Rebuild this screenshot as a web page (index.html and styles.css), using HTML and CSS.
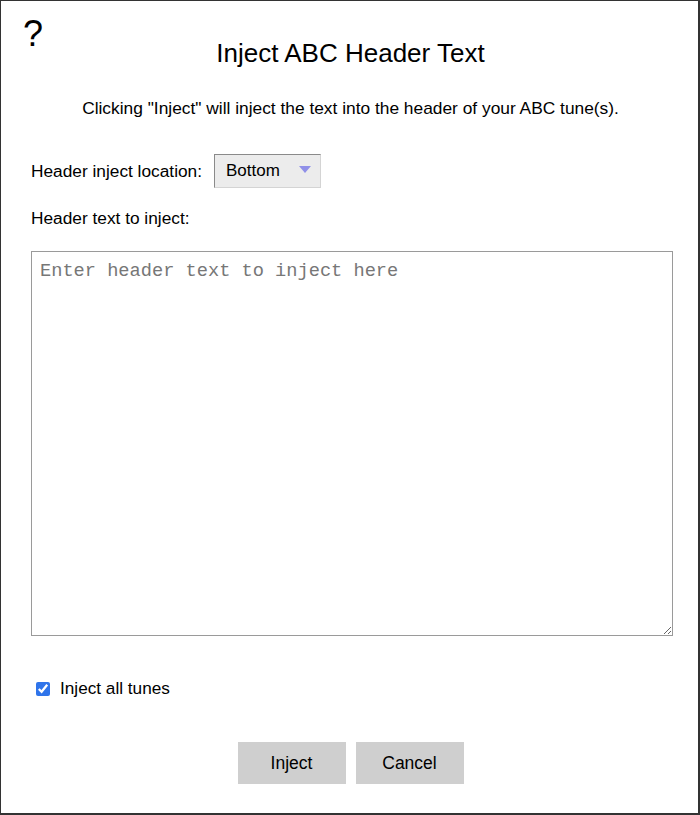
FILE: index.html
```html
<!DOCTYPE html>
<html>
<head>
<meta charset="utf-8">
<link rel="stylesheet" href="styles.css">
</head>
<body>
<div class="dialog">
  <div class="help">?</div>
  <h1 class="title">Inject ABC Header Text</h1>
  <p class="desc">Clicking "Inject" will inject the text into the header of your ABC tune(s).</p>
  <div class="row">
    <span class="label">Header inject location:</span>
    <div class="select">Bottom<span class="arrow"></span></div>
  </div>
  <div class="label label2">Header text to inject:</div>
  <textarea class="text" placeholder="Enter header text to inject here"></textarea>
  <label class="check"><input type="checkbox" checked><span>Inject all tunes</span></label>
  <div class="buttons">
    <button class="btn">Inject</button>
    <button class="btn">Cancel</button>
  </div>
</div>
</body>
</html>
```

FILE: styles.css
```css
html, body {
  margin: 0;
  padding: 0;
  background: #fff;
}
.dialog {
  position: relative;
  box-sizing: border-box;
  width: 700px;
  height: 815px;
  border-style: solid;
  border-color: #333;
  border-width: 1px 2px 2px 1px;
  padding: 0 28px 0 30px;
  font-family: "Liberation Sans", Arial, sans-serif;
  color: #000;
  display: flex;
  flex-direction: column;
}
.help {
  position: absolute;
  left: 22px;
  top: 15px;
  font-size: 36px;
  line-height: 1;
}
.title {
  margin: 37px 0 0 0;
  font-size: 26px;
  font-weight: normal;
  line-height: 30px;
  text-align: center;
}
.desc {
  margin: 30px 0 0 0;
  font-size: 17.35px;
  line-height: 20px;
  text-align: center;
}
.row {
  display: flex;
  align-items: center;
  gap: 12px;
  margin-top: 36px;
}
.label {
  font-size: 17.3px;
  line-height: 20px;
}
.select {
  box-sizing: border-box;
  width: 107px;
  height: 34px;
  background: #ececec;
  border: 1px solid;
  border-color: #8a8a8a #d4d4d4 #d4d4d4 #8a8a8a;
  font-size: 17px;
  display: flex;
  align-items: center;
  padding-left: 11px;
}
.arrow {
  width: 0;
  height: 0;
  border-left: 6px solid transparent;
  border-right: 6px solid transparent;
  border-top: 7px solid #9090e8;
  margin-left: 19px;
  margin-top: -4px;
}
.label2 {
  margin-top: 20px;
}
.text {
  box-sizing: border-box;
  width: 642px;
  height: 385px;
  margin: 23px 0 0 0;
  border: 1px solid #9a9a9a;
  padding: 8px;
  font-family: "Liberation Mono", "Courier New", monospace;
  font-size: 18.67px;
  resize: both;
  outline: none;
}
.text::placeholder {
  color: #777;
}
.check {
  display: flex;
  align-items: center;
  margin-top: 42px;
  font-size: 17.2px;
}
.check input {
  width: 14px;
  height: 14px;
  margin: 0 10px 0 5px;
  accent-color: #2f74ea;
}
.buttons {
  display: flex;
  justify-content: center;
  gap: 10px;
  margin-top: 43px;
}
.btn {
  width: 108px;
  height: 42px;
  background: #cfcfcf;
  border: none;
  font-family: "Liberation Sans", Arial, sans-serif;
  font-size: 17.5px;
  color: #000;
  padding: 0;
}
```
